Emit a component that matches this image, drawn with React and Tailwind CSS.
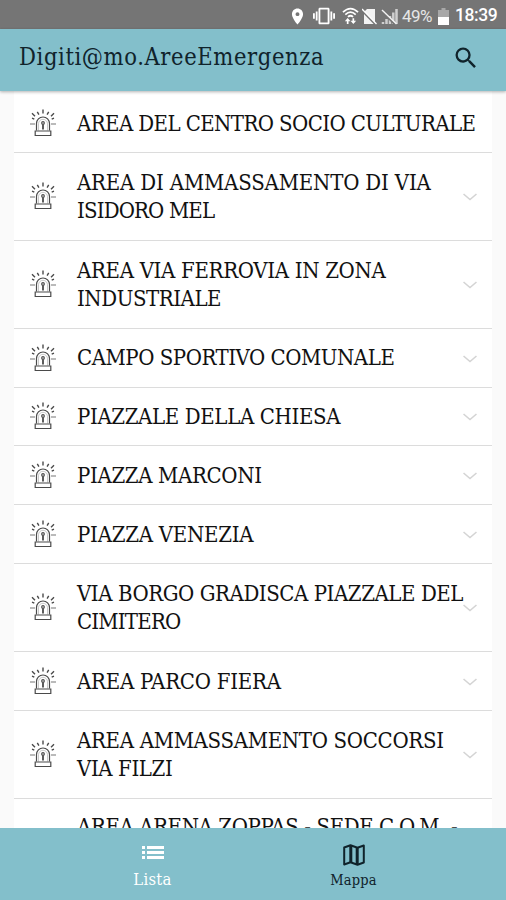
import React from "react";
import { MdSearch, MdLocationOn, MdVibration } from "react-icons/md";

const areas = [
  { lines: [["AREA DEL CENTRO SOCIO CULTURALE", "tracking-[-0.59px]"]] },
  { lines: [["AREA DI AMMASSAMENTO DI VIA", "tracking-[-0.18px]"], ["ISIDORO MEL", "tracking-[-0.85px]"]] },
  { lines: [["AREA VIA FERROVIA IN ZONA", "tracking-[-0.32px]"], ["INDUSTRIALE", "tracking-[-0.45px]"]] },
  { lines: [["CAMPO SPORTIVO COMUNALE", "tracking-[-0.47px]"]] },
  { lines: [["PIAZZALE DELLA CHIESA", "tracking-[-0.37px]"]] },
  { lines: [["PIAZZA MARCONI", "tracking-[-0.35px]"]] },
  { lines: [["PIAZZA VENEZIA", "tracking-[-0.25px]"]] },
  { lines: [["VIA BORGO GRADISCA PIAZZALE DEL", "tracking-[-0.44px]"], ["CIMITERO", "tracking-[-0.8px]"]] },
  { lines: [["AREA PARCO FIERA", "tracking-[-0.24px]"]] },
  { lines: [["AREA AMMASSAMENTO SOCCORSI", "tracking-[-0.31px]"], ["VIA FILZI", "tracking-[-0.4px]"]] },
  { lines: [["AREA ARENA ZOPPAS - SEDE C.O.M. -", "tracking-[-0.4px]"]], tall: true },
];

const Siren = () => (
  <svg viewBox="0 0 28 28" className="w-7 h-7 shrink-0" fill="none" stroke="#4a4a4a" strokeWidth="1.2">
    <path d="M7.500 21.500V14.500a6.500 6.500 0 0 1 13 0V21.500" strokeWidth="1.2" />
    <path d="M9.500 21.500V14.800a4.500 4.500 0 0 1 9 0V21.500" stroke="#bbb" strokeWidth="0.8" />
    <path d="M6.200 22h15.600v4.500H6.200z" />
    <circle cx="14" cy="14" r="1.300" />
    <path d="M14 15.500v5" strokeWidth="1.800" />
    <path d="M14 .5v4M8.300 2.800l1.600 2.800M19.700 2.800l-1.600 2.800M3 4.300l3 3M25 4.300l-3 3M3 9.200l2.300 1M25 9.200l-2.300 1" strokeWidth="1.400" />
    <path d="M1 15h5M22 15h5" stroke="#777" strokeWidth="1.100" />
  </svg>
);

const Chevron = () => (
  <svg viewBox="0 0 14 8" className="absolute right-[15px] top-1/2 -mt-[3px] w-[14px] h-2" fill="none" stroke="#d4d4d4" strokeWidth="1.6">
    <path d="M.5 1 7 6.5 13.5 1" />
  </svg>
);

const StatusBar = () => (
  <div className="h-[29px] shrink-0 bg-[#757575] text-white flex items-center justify-end pr-[9px] pt-[3px] font-['Roboto',sans-serif]">
    <MdLocationOn className="w-[19px] h-[19px] mr-[6px]" />
    <MdVibration className="w-[22px] h-[22px] mr-[7px]" />
    {/* Wifi with traffic arrows */}
    <svg viewBox="0 0 18 18" className="w-[17px] h-[18px] mr-[3px]" fill="none" stroke="#fff" strokeWidth="1.8">
      <path d="M1 5Q9-2.500 17 5M3.500 7.500Q9 2.500 14.500 7.500M6.300 10Q9 7.500 11.700 10" />
      <path d="M6 17.500V13M12 11.500v4" />
      <path d="M3 14.500 6 11l3 3.500zM9 14 12 17.500l3-3.500z" fill="#fff" stroke="none" />
    </svg>
    {/* No SIM */}
    <svg viewBox="0 0 15 17" className="w-[15px] h-[17px] mr-1">
      <path d="M5 1h8v15H2V4z" fill="#f3f3f3" />
      <path d="M0 2.500 14 17" stroke="#757575" strokeWidth="2" />
      <path d="M0 1 14.500 16" stroke="#fff" strokeWidth="1.300" />
    </svg>
    {/* No signal */}
    <svg viewBox="0 0 17 17" className="w-[17px] h-[17px] mr-1">
      <path d="M2 16v-2M5.500 16v-5M9 16V8M12.300 16V4.500M15.500 16V1" stroke="#cfcfcf" strokeWidth="2.500" />
      <path d="M1 3.500 14 16.500" stroke="#757575" strokeWidth="2" />
      <path d="M1 2 15.500 16" stroke="#f3f3f3" strokeWidth="1.400" />
    </svg>
    <span className="text-[17px] leading-none text-[#e6e6e6] w-8 tracking-[-0.5px]">49%</span>
    <svg viewBox="0 0 11 17" className="w-[11px] h-[17px] ml-1 mr-[6px]">
      <path d="M3.500 0h4v2H11v15H0V2h3.500z" fill="#a8a8a8" />
      <path d="M0 9h11v8H0z" fill="#fff" />
    </svg>
    <span className="text-[17.500px] leading-none font-medium w-[42px] tracking-[-0.4px]">18:39</span>
  </div>
);

const App = () => {
  return (
    <div className="w-[506px] h-[900px] overflow-hidden flex flex-col bg-[#fafafa] text-[#111] font-['DejaVu_Serif_Condensed','DejaVu_Serif',serif]">
      <StatusBar />

      {/* App bar */}
      <header className="relative z-10 h-[62px] shrink-0 bg-[#83bfcb] flex items-center justify-between pl-[19px] pr-[26px] pb-1 shadow-[0_1px_3px_rgba(0,0,0,0.3)]">
        <h1 className="text-[23.5px] leading-none whitespace-nowrap text-[#10232b] tracking-[0.6px]">Digiti@mo.AreeEmergenza</h1>
        <MdSearch className="w-7 h-7 text-[#10232b]" />
      </header>

      {/* Area list */}
      <main className="flex-1 min-h-0 overflow-hidden mx-[14px] pt-[3px] bg-white">
        {areas.map((area) => (
          <div
            key={area.lines[0][0]}
            className={
              "relative flex items-center pl-[15px] border-b border-[#dcdcdc] " +
              (area.lines.length > 1 || area.tall ? "h-[88px]" : "h-[58.8px]")
            }
          >
            <Siren />
            <div className={"ml-5 text-[22px] leading-[28.5px] whitespace-nowrap " + (area.tall ? "pb-[31px]" : "pt-[2px]")}>
              {area.lines.map(([text, tracking]) => (
                <div key={text}>
                  <span className={tracking}>{text}</span>
                </div>
              ))}
            </div>
            {area.lines[0][0] !== "AREA DEL CENTRO SOCIO CULTURALE" && <Chevron />}
          </div>
        ))}
      </main>

      {/* Bottom tabs */}
      <nav className="h-[72px] shrink-0 bg-[#83bfcb] flex px-[52px] leading-5">
        <button className="flex-1 flex flex-col items-center pt-[18px] text-white">
          <svg viewBox="0 0 22 13" className="w-[22px] h-[13px]" fill="currentColor">
            <path d="M0 0h3v3H0zM0 5h3v3H0zM0 10h3v3H0zM5 0h17v3H5zM5 5h17v3H5zM5 10h17v3H5z" />
          </svg>
          <span className="mt-[11px] text-[16.5px] tracking-[0.3px]">Lista</span>
        </button>
        <button className="flex-1 flex flex-col items-center pt-4 text-[#10232b]">
          <svg viewBox="0 0 22 22" className="w-[22px] h-[22px]" fill="none" stroke="currentColor" strokeWidth="2">
            <path d="M1.200 3.500 7.500 1.300l7 2.400 6.300-2.200v17l-6.300 2.200-7-2.400-6.300 2.200z" strokeLinejoin="round" />
            <path d="M7.800 1.500v17M14.200 3.500v17" strokeWidth="3" />
          </svg>
          <span className="mt-1 text-[14.5px] tracking-[0.2px]">Mappa</span>
        </button>
      </nav>
    </div>
  );
};

export default App;
